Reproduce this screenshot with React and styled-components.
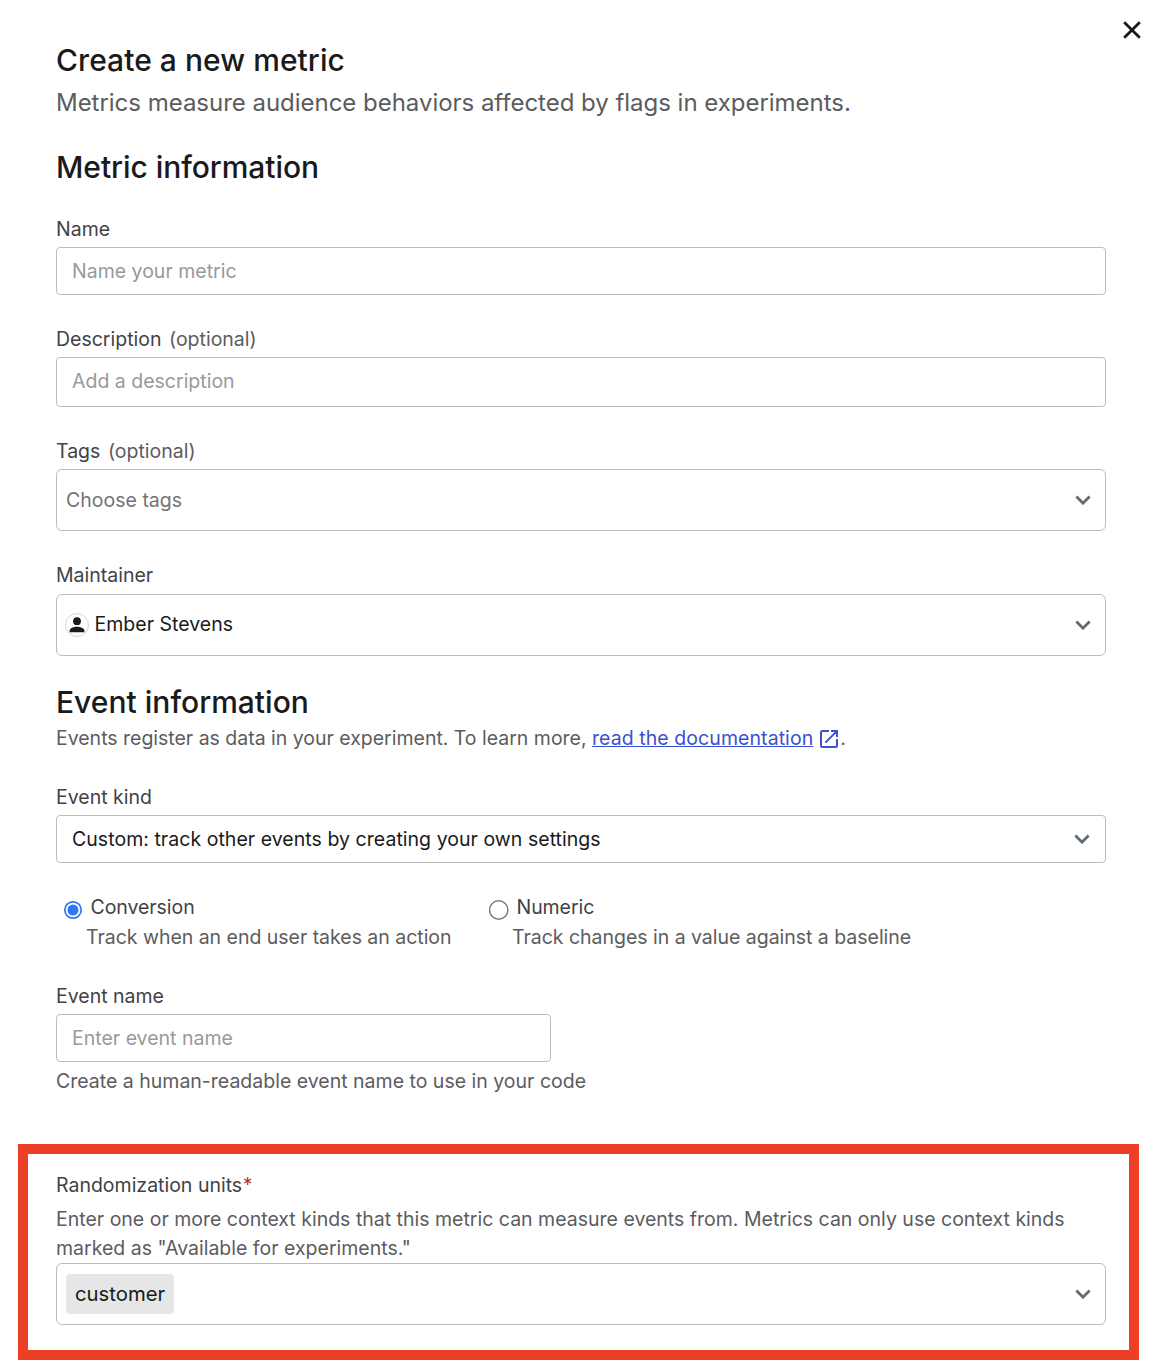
import React, { useState } from "react";
import styled, { createGlobalStyle } from "styled-components";

const GlobalStyle = createGlobalStyle`
  *, *::before, *::after { box-sizing: border-box; }
  body {
    margin: 0;
    background: #fff;
    font-family: Inter, "Liberation Sans", sans-serif;
    font-size: 19.5px;
    letter-spacing: 0;
    color: #5b5c5e;
  }
`;

const Dialog = styled.main`
  position: relative;
  width: 1164px;
  height: 1366px;
  padding: 42px 58px 0 56px;
  background: #fff;
  overflow: hidden;
`;

const CloseButton = styled.button`
  position: absolute;
  top: 18px;
  right: 20px;
  width: 24px;
  height: 24px;
  padding: 0;
  border: 0;
  background: none;
  color: #17181c;

  svg { display: block; }
`;

const Title = styled.h1`
  margin: 0;
  font-size: 30px;
  font-weight: 500;
  line-height: 36px;
  letter-spacing: 0.05px;
  color: #191a1b;
`;

const SectionTitle = styled(Title).attrs({ as: "h2" })`
  margin-top: ${(p) => p.$top}px;
  letter-spacing: ${(p) => p.$tracking || 0}px;
`;

const Subtitle = styled.p`
  margin: 9px 0 0;
  font-size: 24px;
  line-height: 32px;
  letter-spacing: -0.025px;
`;

const Text = styled.p`
  margin: ${(p) => p.$top || 0}px 0 0;
  line-height: 29px;
  letter-spacing: ${(p) => p.$tracking ?? 0}px;
`;

const Link = styled.a`
  letter-spacing: 0.07px;
  color: #3d50d1;
  text-decoration: underline;
  text-decoration-thickness: 1px;
  text-underline-offset: 1px;
`;

const LinkIcon = styled.svg`
  display: inline-block;
  margin: 0 2px 0 7px;
  vertical-align: -3px;
  color: #3d50d1;
`;

const Field = styled.div`
  display: flex;
  flex-direction: column;
  gap: ${(p) => p.$gap || 6}px;
  margin-top: ${(p) => p.$top}px;
`;

const Label = styled.label`
  display: flex;
  gap: 7.5px;
  line-height: 24px;
  color: #414244;
`;

const Optional = styled.span`
  color: #5b5c5e;
`;

const Required = styled.span`
  margin-left: -7px;
  color: #b8312f;
`;

const Input = styled.input`
  width: ${(p) => p.$width || "100%"};
  height: ${(p) => p.$height || 48}px;
  padding: 0 15px ${(p) => (p.$height ? 2 : 0)}px;
  border: 1px solid #bbbcbe;
  border-radius: 4px;
  background: #fff;
  font: inherit;
  letter-spacing: inherit;
  color: #191a1b;

  &::placeholder { color: #98999c; opacity: 1; }
`;

const SelectBox = styled.div`
  display: flex;
  align-items: center;
  justify-content: space-between;
  height: ${(p) => (p.$compact ? 48 : 62)}px;
  padding: ${(p) => (p.$compact ? "0 15px" : "0 14px 0 9px")};
  border: 1px solid #bbbcbe;
  border-radius: ${(p) => (p.$compact ? 4 : 6)}px;
  letter-spacing: ${(p) => (p.$compact ? 0.04 : 0.01)}px;
  color: ${(p) => (p.$empty ? "#737477" : "#191a1b")};
`;

const Value = styled.span`
  display: flex;
  align-items: center;
  gap: 5.5px;
  line-height: 24px;
  padding-bottom: 2px;
`;

const Avatar = styled.svg`
  display: block;
  margin: 2px 0 0 -1px;
`;

const Chip = styled.span`
  height: 40px;
  padding: 0 9px;
  border-radius: 4px;
  background: #e6e6e6;
  font-size: 20.3px;
  line-height: 40px;
  letter-spacing: 0;
`;

const RadioRow = styled.div`
  display: grid;
  grid-template-columns: 426px 1fr;
  margin-top: 31px;
  padding-left: 7px;
`;

const RadioOption = styled.label`
  display: grid;
  grid-template-columns: 20px 1fr;
  column-gap: 7.5px;
  align-items: center;
`;

const RadioLabel = styled.span`
  line-height: 26px;
  letter-spacing: -0.06px;
  color: #414244;
`;

const RadioHint = styled.span`
  grid-column: 1 / -1;
  margin: 3px 0 0 23px;
  line-height: 28px;
  letter-spacing: -0.025px;
`;

const HiddenRadio = styled.input`
  display: none;
`;

const RadioMark = styled.svg`
  display: block;
  margin: 5px 0 0;
`;

const Highlight = styled.section`
  width: 1121px;
  height: 216px;
  margin: 48px 0 0 -38px;
  padding: 19px 23px 0 28px;
  border: 10px solid #eb3f26;
`;

function Chevron({ color = "#68696c" }) {
  return (
    <svg width="16" height="10" viewBox="0 0 16 10" fill="none" aria-hidden="true">
      <path d="M1.4 1.6 8 8.2l6.6-6.6" stroke={color} strokeWidth="2.8" />
    </svg>
  );
}

function Radio({ value, hint, checked, onSelect }) {
  return (
    <RadioOption>
      <HiddenRadio type="radio" name="measure" checked={checked} onChange={onSelect} />
      <RadioMark width="20" height="20" viewBox="0 0 20 20" aria-hidden="true">
        {checked ? (
          <>
            <circle cx="10" cy="10" r="8.2" fill="#fff" stroke="#2b78f6" strokeWidth="1.7" />
            <circle cx="10" cy="10" r="5.5" fill="#2b78f6" />
          </>
        ) : (
          <circle cx="9.7" cy="10" r="9.2" fill="#fff" stroke="#77787a" strokeWidth="1.4" />
        )}
      </RadioMark>
      <RadioLabel>{value}</RadioLabel>
      <RadioHint>{hint}</RadioHint>
    </RadioOption>
  );
}

export default function App() {
  const [measure, setMeasure] = useState("Conversion");
  return (
    <>
      <GlobalStyle />
      <Dialog>
        <CloseButton aria-label="Close">
          <svg width="24" height="24" viewBox="0 0 24 24" fill="none">
            <path d="m4.2 4.2 15.6 15.6M19.8 4.2 4.2 19.8" stroke="currentColor" strokeWidth="2.8" />
          </svg>
        </CloseButton>
        <Title>Create a new metric</Title>
        <Subtitle>Metrics measure audience behaviors affected by flags in experiments.</Subtitle>

        <SectionTitle $top={30} $tracking={-0.05}>Metric information</SectionTitle>
        <Field $top={32}>
          <Label htmlFor="name">Name</Label>
          <Input id="name" placeholder="Name your metric" />
        </Field>
        <Field $top={32}>
          <Label htmlFor="description">Description <Optional>(optional)</Optional></Label>
          <Input id="description" placeholder="Add a description" $height={50} />
        </Field>
        <Field $top={32}>
          <Label>Tags <Optional>(optional)</Optional></Label>
          <SelectBox $empty>
            Choose tags
            <Chevron />
          </SelectBox>
        </Field>
        <Field $top={32} $gap={7}>
          <Label>Maintainer</Label>
          <SelectBox>
            <Value>
              <Avatar width="24" height="24" viewBox="0 0 24 24" aria-hidden="true">
                <circle cx="12" cy="12" r="11.5" fill="#fff" stroke="#d3d4d6" />
                <circle cx="12" cy="8.2" r="3.9" fill="#191a1b" />
                <path d="M4.6 19.3v-1.7c0-2.6 4.4-3.9 7.4-3.9s7.4 1.3 7.4 3.9v1.7z" fill="#191a1b" />
              </Avatar>
              Ember Stevens
            </Value>
            <Chevron />
          </SelectBox>
        </Field>

        <SectionTitle $top={28} $tracking={0.02}>Event information</SectionTitle>
        <Text $top={4} $tracking={-0.015}>
          Events register as data in your experiment. To learn more, <Link>read the documentation</Link>
          <LinkIcon width="18" height="18" viewBox="0 0 18 18" fill="none" aria-hidden="true">
            <path
              d="M9 1H2.2Q1 1 1 2.2v13.6Q1 17 2.2 17h13.6Q17 17 17 15.8V9M11 1h6v6M16.6 1.4 5.4 12.6"
              stroke="currentColor"
              strokeWidth="2"
            />
          </LinkIcon>
          .
        </Text>
        <Field $top={32}>
          <Label>Event kind</Label>
          <SelectBox $compact>
            Custom: track other events by creating your own settings
            <Chevron color="#606a75" />
          </SelectBox>
        </Field>
        <RadioRow>
          <Radio
            value="Conversion"
            hint="Track when an end user takes an action"
            checked={measure === "Conversion"}
            onSelect={() => setMeasure("Conversion")}
          />
          <Radio
            value="Numeric"
            hint="Track changes in a value against a baseline"
            checked={measure === "Numeric"}
            onSelect={() => setMeasure("Numeric")}
          />
        </RadioRow>
        <Field $top={33}>
          <Label htmlFor="event">Event name</Label>
          <Input id="event" placeholder="Enter event name" $width="495px" />
        </Field>
        <Text $top={5}>Create a human-readable event name to use in your code</Text>

        <Highlight>
          <Label>Randomization units<Required>*</Required></Label>
          <Text $top={8}>
            Enter one or more context kinds that this metric can measure events from. Metrics can only use context kinds marked as "Available for experiments."
          </Text>
          <SelectBox>
            <Chip>customer</Chip>
            <Chevron />
          </SelectBox>
        </Highlight>
      </Dialog>
    </>
  );
}
